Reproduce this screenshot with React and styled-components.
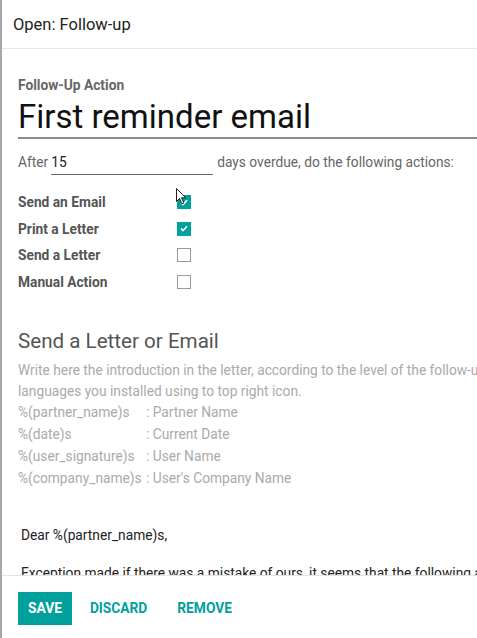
import React from "react";
import styled, { createGlobalStyle } from "styled-components";

const Global = createGlobalStyle`
  html, body { margin: 0; padding: 0; background: #fff; }
  body { font-family: Roboto, "Noto Sans", Arial, sans-serif; overflow: hidden; }
  * { box-sizing: border-box; }
`;

const TEAL = "#00a09d";

const Modal = styled.div`
  width: 477px;
  height: 638px;
  border-left: 2px solid #a8a8a8;
  display: flex;
  flex-direction: column;
  background: #fff;
  overflow: hidden;
`;

const Header = styled.div`
  height: 49px;
  flex: none;
  border-bottom: 1px solid #e6e6e6;
  padding: 0 0 0 11px;
  display: flex;
  align-items: center;
  font-size: 16.5px;
  color: #222;
`;

const Body = styled.div`
  flex: 1;
  overflow: hidden;
  padding: 27px 0 0 16px;
  display: flex;
  flex-direction: column;
`;

const SmallLabel = styled.div`
  font-size: 13.75px;
  font-weight: 700;
  color: #666;
  line-height: 18px;
`;

const TitleInput = styled.div`
  font-size: 33px;
  color: #111;
  line-height: 40px;
  height: 42px;
  border-bottom: 2px solid #8c8c8c;
  margin-top: 3px;
  white-space: nowrap;
`;

const AfterRow = styled.div`
  display: flex;
  align-items: flex-end;
  margin-top: 12px;
  font-size: 13.75px;
  color: #666;
  line-height: 20px;
`;

const DaysField = styled.div`
  width: 162px;
  margin: 0 4px 0 3px;
  color: #222;
  border-bottom: 1px solid #666;
  height: 24px;
  padding-top: 1px;
`;

const AfterText = styled.span`
  padding-bottom: 3px;
`;

const Options = styled.div`
  display: grid;
  grid-template-columns: 159px auto;
  grid-auto-rows: 26.5px;
  align-items: center;
  margin-top: 14px;
  width: max-content;
`;

const OptionLabel = styled.div`
  font-size: 13.75px;
  font-weight: 700;
  color: #555;
`;

const Box = styled.div`
  position: relative;
  width: 14px;
  height: 14px;
  border: 1px solid ${(p) => (p.$checked ? TEAL : "#9a9a9a")};
  background: ${(p) => (p.$checked ? TEAL : "#fff")};
  display: flex;
  align-items: center;
  justify-content: center;
`;

const Cursor = styled.svg`
  position: absolute;
  left: -2px;
  top: -8px;
`;

const SectionTitle = styled.div`
  font-size: 20.6px;
  color: #555;
  margin-top: 34px;
  line-height: 24px;
`;

const Help = styled.div`
  margin-top: 7px;
  font-size: 13.75px;
  color: #aaa;
  line-height: 20.5px;
  white-space: nowrap;
`;

const VarRow = styled.div`
  display: grid;
  grid-template-columns: 128px auto;
  font-size: 13.75px;
  color: #aaa;
  line-height: 22px;
  white-space: nowrap;
`;

const Letter = styled.div`
  margin-top: 36px;
  padding-left: 3px;
  font-size: 13.75px;
  color: #222;
  line-height: 20px;
  white-space: nowrap;
`;

const LetterLine = styled.div`
  margin-bottom: ${(p) => p.$gap || 0}px;
`;

const Footer = styled.div`
  height: 63px;
  flex: none;
  border-top: 1px solid #e3e3e3;
  display: flex;
  align-items: center;
  padding: 2px 0 0 16px;
`;

const Button = styled.button`
  font-family: Roboto, "Noto Sans", Arial, sans-serif;
  font-size: 13.75px;
  font-weight: 700;
  text-transform: uppercase;
  height: 33px;
  padding: 0 9px;
  border: 1px solid ${(p) => (p.$primary ? TEAL : "transparent")};
  background: ${(p) => (p.$primary ? TEAL : "transparent")};
  color: ${(p) => (p.$primary ? "#fff" : TEAL)};
  margin-right: ${(p) => p.$mr || 0}px;
  cursor: pointer;
`;

function Check({ checked, cursor }) {
  return (
    <Box $checked={checked}>
      {checked && (
        <svg width="8" height="7" viewBox="0 0 8 7">
          <path d="M1 3.6 L3 5.5 L7 1.2" fill="none" stroke="#fff" strokeWidth="1.6" />
        </svg>
      )}
      {cursor && (
        <Cursor width="11" height="17" viewBox="0 0 11 17">
          <path d="M0.5 0.5 L0.5 13.5 L3.5 10.5 L5.8 15.8 L7.8 15 L5.6 9.8 L9.8 9.8 Z" fill="#fff" stroke="#222" strokeWidth="1" />
        </Cursor>
      )}
    </Box>
  );
}

const options = [
  ["Send an Email", true, true],
  ["Print a Letter", true, false],
  ["Send a Letter", false, false],
  ["Manual Action", false, false],
];

const vars = [
  ["%(partner_name)s", ": Partner Name"],
  ["%(date)s", ": Current Date"],
  ["%(user_signature)s", ": User Name"],
  ["%(company_name)s", ": User's Company Name"],
];

export default function App() {
  return (
    <>
      <Global />
      <Modal>
        <Header>Open: Follow-up</Header>
        <Body>
          <SmallLabel>Follow-Up Action</SmallLabel>
          <TitleInput>First reminder email</TitleInput>
          <AfterRow>
            <AfterText>After</AfterText>
            <DaysField>15</DaysField>
            <AfterText>days overdue, do the following actions:</AfterText>
          </AfterRow>
          <Options>
            {options.map(([label, checked, cursor]) => (
              <React.Fragment key={label}>
                <OptionLabel>{label}</OptionLabel>
                <Check checked={checked} cursor={cursor} />
              </React.Fragment>
            ))}
          </Options>
          <SectionTitle>Send a Letter or Email</SectionTitle>
          <Help>
            Write here the introduction in the letter, according to the level of the follow-up. You can use the following keywords in the text. Don't forget to translate in all the
            <br />
            languages you installed using to top right icon.
          </Help>
          {vars.map(([k, v]) => (
            <VarRow key={k}>
              <span>{k}</span>
              <span>{v}</span>
            </VarRow>
          ))}
          <Letter>
            <LetterLine $gap={18}>Dear %(partner_name)s,</LetterLine>
            <LetterLine>Exception made if there was a mistake of ours, it seems that the following amount stays unpaid.</LetterLine>
          </Letter>
        </Body>
        <Footer>
          <Button $primary $mr={8}>Save</Button>
          <Button $mr={10}>Discard</Button>
          <Button>Remove</Button>
        </Footer>
      </Modal>
    </>
  );
}
